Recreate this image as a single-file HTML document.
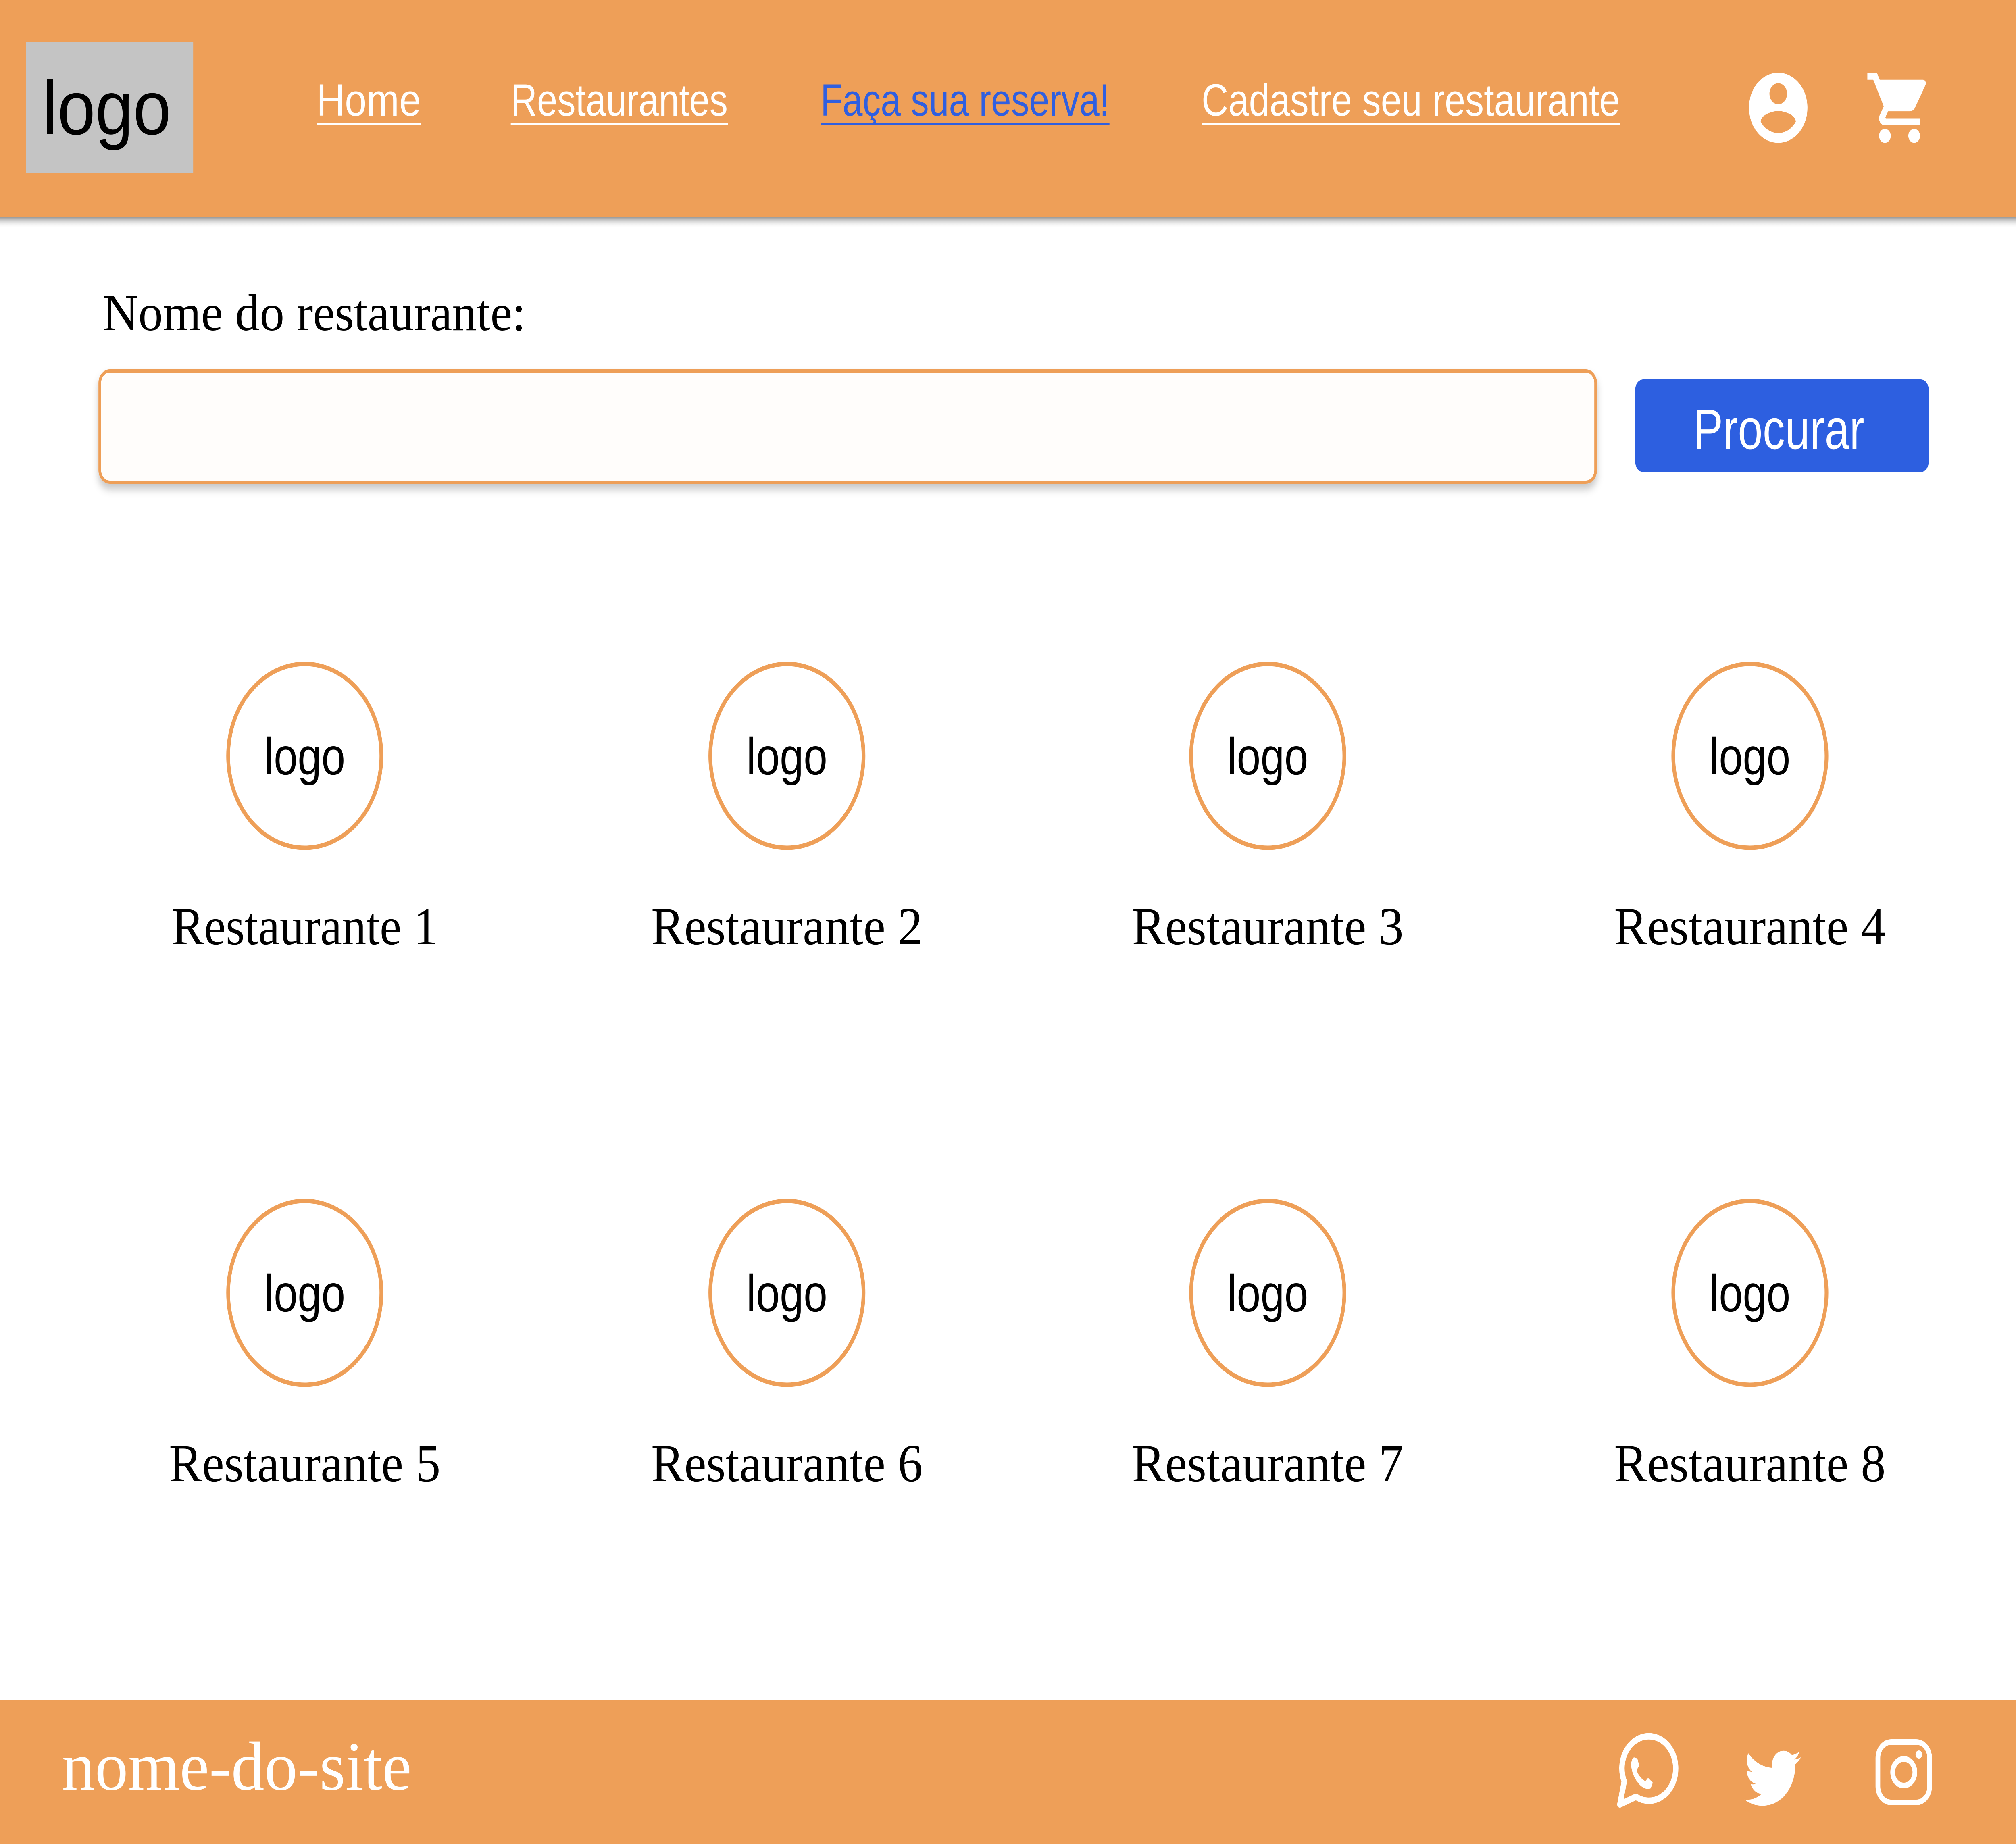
<!DOCTYPE html>
<html><head><meta charset="utf-8"><style>
html,body{margin:0;padding:0;background:#fff;width:100%;height:100%;overflow:hidden}
svg{display:block;position:fixed;left:0;top:0;width:100vw;height:100vh}
</style></head><body>
<svg viewBox="0 0 6000 4584" preserveAspectRatio="none" xmlns="http://www.w3.org/2000/svg">
<defs>
<linearGradient id="sh" x1="0" y1="0" x2="0" y2="1">
<stop offset="0" stop-color="#888" stop-opacity="0.9"/><stop offset="1" stop-color="#fff" stop-opacity="0"/>
</linearGradient>
<filter id="ish" x="-5%" y="-20%" width="110%" height="150%"><feDropShadow dx="0" dy="14" stdDeviation="10" flood-color="#000" flood-opacity="0.22"/></filter>
</defs>
<rect width="6000" height="4584" fill="#fff"/>
<rect x="0" y="0" width="6000" height="538" fill="#EE9F58"/>
<rect x="0" y="538" width="6000" height="28" fill="url(#sh)"/>
<rect x="77" y="104" width="498" height="325" fill="#C4C4C4"/>
<text x="126" y="333" font-family="Liberation Sans, sans-serif" font-size="190" fill="#000" textLength="383" lengthAdjust="spacingAndGlyphs">logo</text>
<g font-family="Liberation Sans, sans-serif" font-size="112" fill="#fff">
<text x="942" y="287" textLength="311" lengthAdjust="spacingAndGlyphs">Home</text>
<rect x="942" y="304" width="311" height="7"/>
<text x="1520" y="287" textLength="646" lengthAdjust="spacingAndGlyphs">Restaurantes</text>
<rect x="1520" y="304" width="646" height="7"/>
<text x="2442" y="287" textLength="860" lengthAdjust="spacingAndGlyphs" fill="#2F5FE0">Faça sua reserva!</text>
<rect x="2442" y="304" width="860" height="7" fill="#2F5FE0"/>
<text x="3576" y="287" textLength="1245" lengthAdjust="spacingAndGlyphs">Cadastre seu restaurante</text>
<rect x="3576" y="304" width="1245" height="7"/>
</g>
<g transform="translate(5188,163) scale(8.7)" fill="#fff">
<path d="M12 2C6.48 2 2 6.48 2 12s4.48 10 10 10 10-4.48 10-10S17.52 2 12 2zm0 3c1.66 0 3 1.34 3 3s-1.34 3-3 3-3-1.34-3-3 1.34-3 3-3zm0 14.2c-2.5 0-4.71-1.28-6-3.22.03-1.99 4-3.08 6-3.08 1.99 0 5.97 1.09 6 3.08-1.29 1.94-3.5 3.22-6 3.22z"/>
</g>
<g transform="translate(5549,163) scale(8.7)" fill="#fff">
<path d="M7 18c-1.1 0-1.99.9-1.99 2S5.9 22 7 22s2-.9 2-2-.9-2-2-2zM1 2v2h2l3.6 7.59-1.350 2.45c-.16.28-.25.61-.25.96 0 1.1.9 2 2 2h12v-2H7.42c-.14 0-.25-.11-.25-.25l.03-.12.9-1.63h7.45c.75 0 1.41-.41 1.75-1.03l3.58-6.49A1.003 1.003 0 0 0 20 4H5.21l-.94-2H1zm16 16c-1.1 0-1.99.9-1.99 2s.89 2 1.99 2 2-.9 2-2-.9-2-2-2z"/>
</g>
<text x="306" y="819" font-family="Liberation Serif, serif" font-size="128" fill="#000" textLength="1259" lengthAdjust="spacingAndGlyphs">Nome do restaurante:</text>
<rect x="297" y="920" width="4452" height="276" rx="30" fill="#FFFDFB" stroke="#EE9F58" stroke-width="8" filter="url(#ish)"/>
<rect x="4867" y="941" width="873" height="230" rx="24" fill="#2D5FE0"/>
<text x="5294" y="1113" text-anchor="middle" font-family="Liberation Sans, sans-serif" font-size="140" fill="#fff" textLength="509" lengthAdjust="spacingAndGlyphs">Procurar</text>
<g font-family="Liberation Sans, sans-serif" font-size="130" fill="#000" text-anchor="middle">
<g fill="#fff" stroke="#EE9F58" stroke-width="11">
<circle cx="907" cy="1875" r="228"/><circle cx="2342" cy="1875" r="228"/><circle cx="3773" cy="1875" r="228"/><circle cx="5208" cy="1875" r="228"/>
<circle cx="907" cy="3207" r="228"/><circle cx="2342" cy="3207" r="228"/><circle cx="3773" cy="3207" r="228"/><circle cx="5208" cy="3207" r="228"/>
</g>
<text x="907" y="1921" textLength="241" lengthAdjust="spacingAndGlyphs">logo</text>
<text x="2342" y="1921" textLength="241" lengthAdjust="spacingAndGlyphs">logo</text>
<text x="3773" y="1921" textLength="241" lengthAdjust="spacingAndGlyphs">logo</text>
<text x="5208" y="1921" textLength="241" lengthAdjust="spacingAndGlyphs">logo</text>
<text x="907" y="3253" textLength="241" lengthAdjust="spacingAndGlyphs">logo</text>
<text x="2342" y="3253" textLength="241" lengthAdjust="spacingAndGlyphs">logo</text>
<text x="3773" y="3253" textLength="241" lengthAdjust="spacingAndGlyphs">logo</text>
<text x="5208" y="3253" textLength="241" lengthAdjust="spacingAndGlyphs">logo</text>
</g>
<g font-family="Liberation Serif, serif" font-size="132" fill="#000" text-anchor="middle">
<text x="907" y="2342" textLength="792" lengthAdjust="spacingAndGlyphs">Restaurante 1</text>
<text x="2342" y="2342" textLength="808" lengthAdjust="spacingAndGlyphs">Restaurante 2</text>
<text x="3773" y="2342" textLength="808" lengthAdjust="spacingAndGlyphs">Restaurante 3</text>
<text x="5208" y="2342" textLength="808" lengthAdjust="spacingAndGlyphs">Restaurante 4</text>
<text x="907" y="3674" textLength="808" lengthAdjust="spacingAndGlyphs">Restaurante 5</text>
<text x="2342" y="3674" textLength="808" lengthAdjust="spacingAndGlyphs">Restaurante 6</text>
<text x="3773" y="3674" textLength="808" lengthAdjust="spacingAndGlyphs">Restaurante 7</text>
<text x="5208" y="3674" textLength="808" lengthAdjust="spacingAndGlyphs">Restaurante 8</text>
</g>
<rect x="0" y="4216" width="6000" height="358" fill="#EE9F58"/>
<text x="184" y="4439" font-family="Liberation Serif, serif" font-size="172" fill="#fff" textLength="1041" lengthAdjust="spacingAndGlyphs">nome-do-site</text>
<g transform="translate(4801,4314)" fill="none" stroke="#fff">
<path d="M20 162 L33 105 A80 80 0 1 1 68 143 Z" stroke-width="16" stroke-linejoin="round"/>
<path d="M62 45 C52 50 50 70 62 92 C75 115 95 128 112 122 L118 108 L104 96 L96 104 C84 100 72 86 70 76 L78 66 L72 48 Z" fill="#fff" stroke="none"/>
</g>
<g transform="translate(5192,4327) scale(7)" fill="#fff">
<path d="M23.95 4.57a10 10 0 0 1-2.82.77 4.96 4.96 0 0 0 2.16-2.72c-.95.56-2 .96-3.12 1.19a4.92 4.92 0 0 0-8.38 4.48A13.94 13.94 0 0 1 1.64 3.16a4.92 4.92 0 0 0 1.52 6.57 4.9 4.9 0 0 1-2.23-.61v.06a4.92 4.92 0 0 0 3.95 4.83 4.9 4.9 0 0 1-2.21.08 4.93 4.93 0 0 0 4.6 3.42A9.87 9.87 0 0 1 0 19.54a13.94 13.94 0 0 0 7.55 2.21c9.05 0 14-7.5 14-13.98 0-.21 0-.42-.02-.63A9.94 9.94 0 0 0 24 4.59z"/>
</g>
<g transform="translate(5582,4314)">
<rect x="7" y="7" width="154" height="150" rx="40" fill="none" stroke="#fff" stroke-width="14"/>
<circle cx="84" cy="82" r="33" fill="none" stroke="#fff" stroke-width="14"/>
<circle cx="129" cy="38" r="10" fill="#fff"/>
</g>
</svg>
</body></html>
